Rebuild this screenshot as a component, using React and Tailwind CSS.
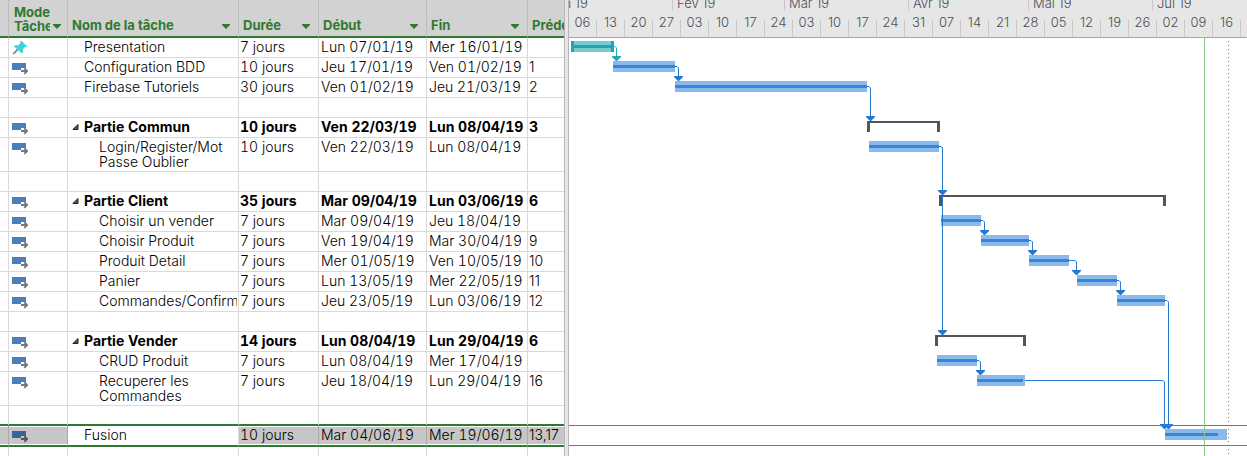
const COLS = [
  { label: 'Nom de la tâche', menu: true },
  { label: 'Durée', menu: true },
  { label: 'Début', menu: true },
  { label: 'Fin', menu: true },
  { label: 'Prédécesseurs', menu: false },
];

const TASKS = [
  { mode: 'pin', name: 'Presentation', d: '7 jours', s: 'Lun 07/01/19', e: 'Mer 16/01/19', p: '' },
  { mode: 'auto', name: 'Configuration BDD', d: '10 jours', s: 'Jeu 17/01/19', e: 'Ven 01/02/19', p: '1' },
  { mode: 'auto', name: 'Firebase Tutoriels', d: '30 jours', s: 'Ven 01/02/19', e: 'Jeu 21/03/19', p: '2' },
  {},
  { mode: 'auto', name: 'Partie Commun', summary: true, d: '10 jours', s: 'Ven 22/03/19', e: 'Lun 08/04/19', p: '3' },
  { mode: 'auto', name: 'Login/Register/Mot Passe Oublier', sub: true, tall: true, d: '10 jours', s: 'Ven 22/03/19', e: 'Lun 08/04/19', p: '' },
  {},
  { mode: 'auto', name: 'Partie Client', summary: true, d: '35 jours', s: 'Mar 09/04/19', e: 'Lun 03/06/19', p: '6' },
  { mode: 'auto', name: 'Choisir un vender', sub: true, d: '7 jours', s: 'Mar 09/04/19', e: 'Jeu 18/04/19', p: '' },
  { mode: 'auto', name: 'Choisir Produit', sub: true, d: '7 jours', s: 'Ven 19/04/19', e: 'Mar 30/04/19', p: '9' },
  { mode: 'auto', name: 'Produit Detail', sub: true, d: '7 jours', s: 'Mer 01/05/19', e: 'Ven 10/05/19', p: '10' },
  { mode: 'auto', name: 'Panier', sub: true, d: '7 jours', s: 'Lun 13/05/19', e: 'Mer 22/05/19', p: '11' },
  { mode: 'auto', name: 'Commandes/Confirmation', sub: true, d: '7 jours', s: 'Jeu 23/05/19', e: 'Lun 03/06/19', p: '12' },
  {},
  { mode: 'auto', name: 'Partie Vender', summary: true, d: '14 jours', s: 'Lun 08/04/19', e: 'Lun 29/04/19', p: '6' },
  { mode: 'auto', name: 'CRUD Produit', sub: true, d: '7 jours', s: 'Lun 08/04/19', e: 'Mer 17/04/19', p: '' },
  { mode: 'auto', name: 'Recuperer les Commandes', sub: true, tall: true, d: '7 jours', s: 'Jeu 18/04/19', e: 'Lun 29/04/19', p: '16' },
  { beforeSelected: true },
  { mode: 'auto', name: 'Fusion', selected: true, d: '10 jours', s: 'Mar 04/06/19', e: 'Mer 19/06/19', p: '13,17' },
  {},
];

const WEEKS = ['06', '13', '20', '27', '03', '10', '17', '24', '03', '10', '17', '24', '31', '07', '14', '21', '28', '05', '12', '19', '26', '02', '09', '16'];

function Arrow() {
  return (
    <svg width="8" height="5" viewBox="0 0 8 5" className="shrink-0" aria-hidden="true">
      <path d="M0 0h8v1L4 5L0 1z" fill="#2f7a2f" />
    </svg>
  );
}

function ModeIcon({ mode, selected }) {
  if (mode === 'pin') {
    return (
      <svg width="16" height="16" viewBox="0 0 16 16" className="block" aria-label="Manuel" role="img">
        <path d="M5.8 9.4L1.2 14" stroke="#777" strokeWidth="1.6" />
        <path d="M9 0.6L15 6.2L14.4 7.2L12.8 6.9L11 9.2L11.2 12.4L9.8 13.2L2 6.4L2.8 5.2L6.2 5.2L8.6 3L8.2 1.6z" fill="#3fd4d8" />
      </svg>
    );
  }
  return (
    <svg width="16" height="12" viewBox="0 0 16 12" className="block" aria-label="Automatique" role="img">
      <path d="M0 0h14v5H9v2H0z" fill={selected ? '#3a6596' : '#4a80b8'} />
      <path d="M9 8H15M12.2 5.2L15.2 8L12.2 10.8" fill="none" stroke={selected ? '#555' : '#777'} strokeWidth="1.8" />
    </svg>
  );
}

function HeaderButton({ label, menu }) {
  return (
    <button type="button" className="flex h-[36px] w-full items-end overflow-hidden pb-[3px] pl-1 pr-2 text-left">
      <span className="grow whitespace-nowrap">{label}</span>
      {menu && <span className="pb-1"><Arrow /></span>}
    </button>
  );
}

function TaskRow({ t }) {
  const sel = t.selected;
  const line = sel || t.beforeSelected ? 'border-b-2 border-b-[#2f7a2f]' : 'border-b border-b-[#d9d9d9]';
  const shade = sel
    ? 'bg-[#c6c6c6] border-r-[#aaa] shadow-[inset_0_1px_0_#fff,inset_0_-1px_0_#fff]'
    : 'border-r-[#d9d9d9]';
  const cell = `overflow-hidden whitespace-nowrap border-r p-0 align-top ${line} ${shade}`;
  const height = t.tall ? 'h-[34px]' : sel ? 'h-[21px]' : 'h-5';
  return (
    <tr className={`leading-[18px] tabular-nums ${height} ${t.summary ? 'font-bold' : 'font-light'}`}>
      <td className={cell} />
      <td className={`${cell} pl-[3px]`}>
        {t.mode && <div className={t.mode === 'pin' ? 'pt-0.5' : 'pt-[5px]'}><ModeIcon mode={t.mode} selected={sel} /></div>}
      </td>
      <td className={`overflow-hidden border-r p-0 pr-px align-top border-r-[#d9d9d9] ${line} ${t.tall ? '' : 'whitespace-nowrap'}`}>
        <div className={`flex overflow-hidden ${t.sub ? 'pl-[31px]' : 'pl-1'}`}>
          {!t.sub && t.name && (
            <span className="w-3 shrink-0 pt-[6px]">
              {t.summary && (
                <svg width="7" height="6" viewBox="0 0 7 6" className="block" aria-hidden="true">
                  <path d="M6 0.5v5H0.8z" fill="#555" stroke="#222" strokeWidth="1" />
                </svg>
              )}
            </span>
          )}
          <span className={t.tall ? 'pt-px leading-[15px]' : ''}>{t.name}</span>
        </div>
      </td>
      <td className={`${cell} pl-px`}>{t.d}</td>
      <td className={`${cell} pl-0.5`}>{t.s}</td>
      <td className={`${cell} pl-0.5`}>{t.e}</td>
      <td className={`${cell} border-r-0 pl-px proportional-nums`}>{t.p}</td>
    </tr>
  );
}

function TaskTable() {
  return (
    <table className="w-full table-fixed border-separate border-spacing-0">
      <colgroup>
        <col className="w-[9px]" />
        <col className="w-[59px]" />
        <col className="w-[171px]" />
        <col className="w-[80px]" />
        <col className="w-[108px]" />
        <col className="w-[101px]" />
        <col />
      </colgroup>
      <thead>
        <tr className="bg-[#d2d2d2] text-[13px] leading-[15px] text-[#2f7a2f]">
          <th className="border-b-2 border-r border-b-[#2f7a2f] border-r-[#bcbcbc] p-0" />
          <th className="border-b-2 border-r border-b-[#2f7a2f] border-r-[#bcbcbc] p-0 font-bold">
            <button type="button" className="flex h-[36px] w-full items-end gap-[3px] overflow-hidden pb-[3px] pl-[5px] pr-1.5 text-left leading-[14px]">
              <span className="w-0 grow overflow-hidden whitespace-nowrap">Mode<br />Tâche</span>
              <span className="pb-1 leading-[15px]"><Arrow /></span>
            </button>
          </th>
          {COLS.map((c) => (
            <th key={c.label} className="overflow-hidden border-b-2 border-r border-b-[#2f7a2f] border-r-[#bcbcbc] p-0 font-bold last:border-r-0">
              <HeaderButton {...c} />
            </th>
          ))}
        </tr>
      </thead>
      <tbody>
        {TASKS.map((t, i) => <TaskRow key={i} t={t} />)}
      </tbody>
    </table>
  );
}

const MONTHS = [
  ['Jan 19', 'w-[104px]'],
  ['Fev 19', 'w-[112px]'],
  ['Mar 19', 'w-[124px]'],
  ['Avr 19', 'w-[120px]'],
  ['Mai 19', 'w-[124px]'],
  ['Jui 19', 'grow'],
];

function Timescale() {
  return (
    <div className="h-[38px] overflow-hidden border-b border-[#a6a6a6] bg-[#e6e6e6] text-[13px] font-light text-[#4a4e56]">
      <div className="flex h-[11px]">
        {MONTHS.map(([m, w], i) => (
          <div key={m} className={`flex shrink-0 items-end leading-[14px] ${w} ${i < 5 ? 'border-r border-[#c8c8c8]' : ''}`}>
            <span className={i ? 'pb-px pl-1' : '-ml-5 pb-px'}>{m}</span>
          </div>
        ))}
      </div>
      <div className="flex h-[26px]">
        {WEEKS.map((w, i) => (
          <div key={i} className="flex w-7 shrink-0 items-end">
            <span className="grow self-start text-center leading-[22px]">{w}</span>
            <span className="h-[17px] w-px bg-[#c8c8c8]" />
          </div>
        ))}
      </div>
    </div>
  );
}

const TASK_BARS = [
  { x: 44, y: 23, w: 62 },
  { x: 106, y: 43, w: 192 },
  { x: 300, y: 103, w: 70 },
  { x: 372, y: 177, w: 40 },
  { x: 412, y: 197, w: 48 },
  { x: 460, y: 217, w: 40 },
  { x: 508, y: 237, w: 40 },
  { x: 548, y: 257, w: 48 },
  { x: 368, y: 317, w: 40 },
  { x: 408, y: 337, w: 48, p: 46 },
  { x: 596, y: 391, w: 62, p: 53 },
];

const SUMMARIES = [
  { x: 298, y: 83, w: 73 },
  { x: 370, y: 157, w: 227 },
  { x: 366, y: 297, w: 91 },
];

const LINKS = [
  { x: 106, y: 28, tx: 109, ty: 43 },
  { x: 298, y: 48, tx: 301, ty: 83 },
  { x: 370, y: 108, tx: 373, ty: 157 },
  { x: 370, y: 108, tx: 373, ty: 297 },
  { x: 412, y: 182, tx: 415, ty: 197 },
  { x: 460, y: 202, tx: 463, ty: 217 },
  { x: 500, y: 222, tx: 507, ty: 237 },
  { x: 548, y: 242, tx: 551, ty: 257 },
  { x: 596, y: 262, tx: 599, ty: 391 },
  { x: 408, y: 322, tx: 411, ty: 337 },
  { x: 456, y: 342, tx: 595, ty: 391 },
];

function Link({ x, y, tx, ty, color = '#2478d0' }) {
  return (
    <g>
      <path d={`M${x} ${y + 0.5}H${tx - 1}L${tx + 0.5} ${y + 2}V${ty - 4}`} fill="none" stroke={color} />
      <path d={`M${tx - 4} ${ty - 5}h9v1l-4 4h-1l-4 -4z`} fill={color} />
    </g>
  );
}

function Chart() {
  return (
    <svg className="block w-full" height="418" role="img" aria-label="Diagramme de Gantt">
      <path d="M659.5 3V418" stroke="#777" strokeDasharray="1 3" />
      <rect x="2" y="3" width="43" height="11" fill="#74cbd0" />
      <rect x="2" y="7" width="43" height="3" fill="#28a2ac" />
      <rect x="2" y="3" width="3" height="11" fill="#28a2ac" />
      <rect x="42" y="3" width="3" height="11" fill="#28a2ac" />
      {TASK_BARS.map((b) => (
        <g key={b.y}>
          <rect x={b.x} y={b.y} width={b.w} height="11" fill="#8abaec" />
          <rect x={b.x} y={b.y + 4} width={b.p || b.w} height="3" fill="#3a85d3" />
        </g>
      ))}
      {SUMMARIES.map((b) => (
        <path key={b.y} d={`M${b.x} ${b.y}h${b.w}v11h-3v-9h${6 - b.w}v9h-3z`} fill="#555" />
      ))}
      <Link x={45} y={8} tx={47} ty={23} color="#22aab6" />
      {LINKS.map((l, i) => <Link key={i} {...l} />)}
      <rect x="0" y="387" width="100%" height="1" fill="#777" />
      <rect x="0" y="407" width="100%" height="1" fill="#777" />
      <rect x="635" y="0" width="1" height="418" fill="#8cc48c" />
    </svg>
  );
}

export default function App() {
  return (
    <main className="flex w-full overflow-hidden bg-white font-['Inter','Liberation_Sans',sans-serif] text-[14px] text-black">
      <section className="w-[564px] shrink-0 overflow-hidden">
        <TaskTable />
      </section>
      <div className="w-[5px] shrink-0 border-x border-[#b5b5b5] bg-[#e6e6e6]" />
      <section className="min-w-0 grow overflow-hidden">
        <Timescale />
        <Chart />
      </section>
    </main>
  );
}
